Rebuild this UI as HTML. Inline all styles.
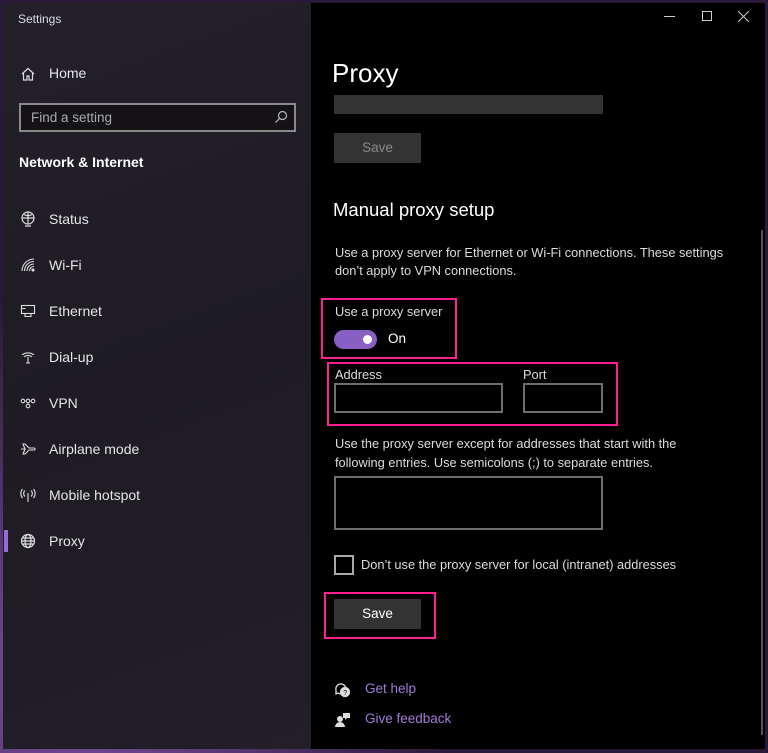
<!DOCTYPE html>
<html><head><meta charset="utf-8"><style>
*{margin:0;padding:0;box-sizing:border-box}
body{width:768px;height:753px;overflow:hidden;background:#3a2548;font-family:"Liberation Sans",sans-serif;position:relative}
.a{position:absolute;white-space:nowrap}
#bg{position:absolute;inset:0;background:radial-gradient(circle at 10% 90%,#7b4ea0,#2a1838 40%),#2a1838}
#left{position:absolute;left:3px;top:3px;width:308px;height:746px;background:linear-gradient(160deg,#24202a,#1e1b22 50%,#231e28)}
#right{position:absolute;left:311px;top:3px;width:454px;height:746px;background:#000}
.t{color:#e6e6e6;font-size:14px}
.ic{position:absolute;left:20px;width:16px;height:16px}
.s{color:#dcdcdc;font-size:12.8px}
.pink{position:absolute;border:2.5px solid #ff1f8e}
.btn{position:absolute;background:#333;color:#fff;font-size:13.5px;text-align:center;line-height:30px}
.box{position:absolute;border:2px solid #6e6e6e}
</style></head><body>
<div id="bg"></div>
<div id="left">
</div>
<div class="a" style="left:18px;top:12px;color:#ddd;font-size:12px">Settings</div>
<svg class="ic" style="top:66px" viewBox="0 0 16 16" fill="none" stroke="#ddd" stroke-width="1.2"><path d="M2 8L8 2.5 14 8M3.5 7v7h3.5v-4h2v4h3.5V7"/></svg>
<div class="a t" style="left:49px;top:65px">Home</div>
<div class="a" style="left:19px;top:103px;width:277px;height:29px;border:2px solid #8a8a8a;background:#141216"></div>
<div class="a" style="left:31px;top:110px;color:#aaa;font-size:13.5px">Find a setting</div>
<svg class="a" style="left:274px;top:110px" width="14" height="14" viewBox="0 0 14 14" fill="none" stroke="#bbb" stroke-width="1.2"><circle cx="8.5" cy="5.5" r="4"/><path d="M5.5 8.5L1.5 12.5"/></svg>
<div class="a" style="left:19px;top:154px;color:#fff;font-size:14px;font-weight:bold">Network &amp; Internet</div>

<svg class="ic" style="top:211px" viewBox="0 0 16 16" fill="none" stroke="#ddd" stroke-width="1.2"><circle cx="8" cy="7" r="6"/><path d="M2 7h12M8 1v12M4 3.5c2 1.5 6 1.5 8 0M5 15h6"/></svg>
<div class="a t" style="left:49px;top:211px">Status</div>
<svg class="ic" style="top:257px" viewBox="0 0 16 16" fill="none" stroke="#ddd" stroke-width="1.1"><path d="M2 14A12 12 0 0 1 14 2M4.5 14A9.5 9.5 0 0 1 14 4.5M7 14A7 7 0 0 1 14 7M9.5 14A4.5 4.5 0 0 1 14 9.5"/><circle cx="13" cy="13" r="1" fill="#ddd"/></svg>
<div class="a t" style="left:49px;top:257px">Wi-Fi</div>
<svg class="ic" style="top:303px" viewBox="0 0 16 16" fill="none" stroke="#ddd" stroke-width="1.1"><rect x="1.5" y="2.5" width="13" height="8"/><path d="M5 10.5v3h6v-3M1.5 5.5h4"/></svg>
<div class="a t" style="left:49px;top:303px">Ethernet</div>
<svg class="ic" style="top:349px" viewBox="0 0 16 16" fill="none" stroke="#ddd" stroke-width="1.1"><path d="M2 6A8 6 0 0 1 14 6M4 8A5 4 0 0 1 12 8M8 8v6M6 14h4"/></svg>
<div class="a t" style="left:49px;top:349px">Dial-up</div>
<svg class="ic" style="top:395px" viewBox="0 0 16 16" fill="none" stroke="#ddd" stroke-width="1.1"><circle cx="3" cy="6" r="1.8"/><circle cx="8" cy="6" r="1.8"/><circle cx="13" cy="6" r="1.8"/><circle cx="8" cy="11" r="1.8"/></svg>
<div class="a t" style="left:49px;top:395px">VPN</div>
<svg class="ic" style="top:441px" viewBox="0 0 16 16" fill="none" stroke="#ddd" stroke-width="1.1"><path d="M1 8h4l-2-5h2l4 4h5a1 1 0 0 1 0 2h-5l-4 4h-2l2-5H1"/></svg>
<div class="a t" style="left:49px;top:441px">Airplane mode</div>
<svg class="ic" style="top:487px" viewBox="0 0 16 16" fill="none" stroke="#ddd" stroke-width="1.1"><path d="M8 6v9M5 3.5a4 4 0 0 0 0 6M11 3.5a4 4 0 0 1 0 6M2.5 2a7 7 0 0 0 0 9M13.5 2a7 7 0 0 1 0 9"/></svg>
<div class="a t" style="left:49px;top:487px">Mobile hotspot</div>
<div class="a" style="left:4px;top:530px;width:4px;height:22px;background:#9a6ad6"></div>
<svg class="ic" style="top:533px" viewBox="0 0 16 16" fill="none" stroke="#ddd" stroke-width="1.2"><circle cx="8" cy="8" r="6.5"/><ellipse cx="8" cy="8" rx="3" ry="6.5"/><path d="M1.5 8h13M2.5 5h11M2.5 11h11"/></svg>
<div class="a t" style="left:49px;top:533px">Proxy</div>

<div id="right"></div>
<div class="a" style="left:664px;top:16px;width:11px;height:1px;background:#ccc"></div>
<div class="a" style="left:702px;top:11px;width:10px;height:10px;border:1px solid #ccc"></div>
<svg class="a" style="left:738px;top:11px" width="11" height="11" viewBox="0 0 11 11" stroke="#ccc"><path d="M0 0L11 11M11 0L0 11"/></svg>
<div class="a" style="left:332px;top:58px;color:#fff;font-size:26px">Proxy</div>
<div class="a" style="left:334px;top:95px;width:269px;height:19px;background:#333"></div>
<div class="btn" style="left:334px;top:133px;width:87px;height:30px;color:#8a8a8a">Save</div>
<div class="a" style="left:333px;top:199px;color:#fff;font-size:18.5px">Manual proxy setup</div>
<div class="a s" style="left:335px;top:244px;line-height:18px">Use a proxy server for Ethernet or Wi-Fi connections. These settings<br>don’t apply to VPN connections.</div>
<div class="pink" style="left:321px;top:298px;width:136px;height:61px"></div>
<div class="a s" style="left:335px;top:304px">Use a proxy server</div>
<div class="a" style="left:334px;top:330px;width:43px;height:19px;border-radius:10px;background:#8a5fc4"></div>
<div class="a" style="left:363px;top:335px;width:9px;height:9px;border-radius:50%;background:#fff"></div>
<div class="a" style="left:388px;top:331px;color:#fff;font-size:13.5px">On</div>
<div class="pink" style="left:327px;top:362px;width:291px;height:64px"></div>
<div class="a s" style="left:335px;top:367px">Address</div>
<div class="box" style="left:334px;top:383px;width:169px;height:30px"></div>
<div class="a s" style="left:523px;top:367px">Port</div>
<div class="box" style="left:523px;top:383px;width:80px;height:30px"></div>
<div class="a s" style="left:335px;top:434px;line-height:19px">Use the proxy server except for addresses that start with the<br>following entries. Use semicolons (;) to separate entries.</div>
<div class="box" style="left:334px;top:476px;width:269px;height:54px"></div>
<div class="box" style="left:334px;top:555px;width:20px;height:20px;border-color:#aaa"></div>
<div class="a s" style="left:361px;top:557px">Don’t use the proxy server for local (intranet) addresses</div>
<div class="pink" style="left:324px;top:592px;width:112px;height:47px"></div>
<div class="btn" style="left:334px;top:599px;width:87px;height:30px">Save</div>
<svg class="a" style="left:334px;top:681px" width="17" height="17" viewBox="0 0 17 17" fill="none" stroke="#ddd" stroke-width="1.3"><path d="M2 9a5 5 0 1 1 2 3l-2 1z"/><circle cx="11" cy="11" r="4.5" fill="#ddd"/><text x="9.3" y="14" font-size="7" fill="#000" stroke="none" font-family="Liberation Sans">?</text></svg>
<div class="a" style="left:365px;top:681px;color:#a07ad8;font-size:13.5px">Get help</div>
<svg class="a" style="left:334px;top:711px" width="17" height="17" viewBox="0 0 17 17" fill="#ddd"><circle cx="6" cy="8" r="3"/><path d="M1 16a5 5 0 0 1 10 0z"/><path d="M9 2h7v5h-3l-2 2V7H9z"/></svg>
<div class="a" style="left:365px;top:711px;color:#a07ad8;font-size:13.5px">Give feedback</div>
<div class="a" style="left:761px;top:230px;width:2px;height:505px;background:#555"></div>
</body></html>
